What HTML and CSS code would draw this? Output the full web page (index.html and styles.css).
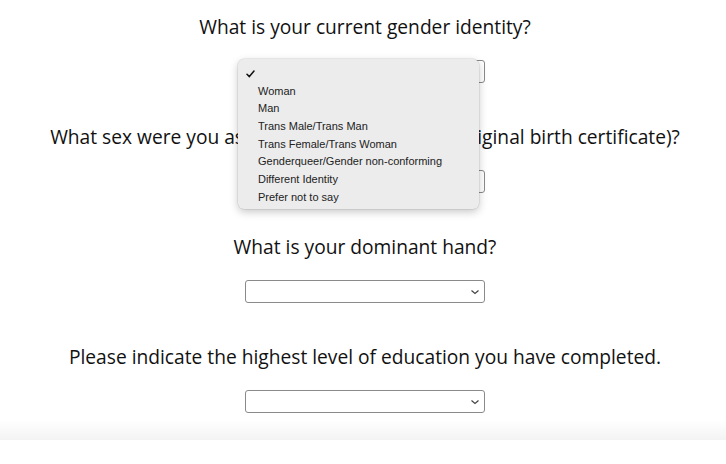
FILE: index.html
```html
<!DOCTYPE html>
<html lang="en">
<head>
<meta charset="utf-8">
<title>Survey</title>
<link rel="stylesheet" href="styles.css">
</head>
<body>
<main class="form">
  <section class="question">
    <h2 class="label">What is your current gender identity?</h2>
    <div class="select-wrap">
      <select class="field" aria-label="What is your current gender identity?"><option></option></select>
      <ul class="popup">
        <li class="opt selected"><svg class="check" width="9" height="8" viewBox="0 0 9 8" aria-hidden="true"><path d="M1 4.2 L3.4 6.6 L8 1" fill="none" stroke="#111" stroke-width="1.5" stroke-linecap="round" stroke-linejoin="round"/></svg></li>
        <li class="opt">Woman</li>
        <li class="opt">Man</li>
        <li class="opt">Trans Male/Trans Man</li>
        <li class="opt">Trans Female/Trans Woman</li>
        <li class="opt">Genderqueer/Gender non-conforming</li>
        <li class="opt">Different Identity</li>
        <li class="opt">Prefer not to say</li>
      </ul>
    </div>
  </section>
  <section class="question">
    <h2 class="label">What sex were you assigned at birth (on your original birth certificate)?</h2>
    <div class="select-wrap">
      <select class="field" aria-label="sex"><option></option></select>
    </div>
  </section>
  <section class="question">
    <h2 class="label">What is your dominant hand?</h2>
    <div class="select-wrap">
      <select class="field" aria-label="hand"><option></option></select>
    </div>
  </section>
  <section class="question">
    <h2 class="label">Please indicate the highest level of education you have completed.</h2>
    <div class="select-wrap">
      <select class="field" aria-label="education"><option></option></select>
    </div>
  </section>
</main>
<div class="shade"></div>
</body>
</html>
```

FILE: styles.css
```css
html, body {
  margin: 0;
  padding: 0;
  background: #fff;
}
body {
  font-family: "Open Sans", "Noto Sans", sans-serif;
  color: #111;
  height: 464px;
  overflow: hidden;
  position: relative;
}
.form {
  display: flex;
  flex-direction: column;
  align-items: center;
  padding-top: 10px;
  padding-left: 4px;
}
.question {
  display: flex;
  flex-direction: column;
  align-items: center;
  margin-bottom: 37px;
}
.label {
  margin: 0 0 16px;
  font-size: 19.2px;
  font-weight: 400;
  line-height: 34px;
  text-align: center;
  white-space: nowrap;
}
.select-wrap {
  position: relative;
  height: 23px;
}
.field {
  -webkit-appearance: none;
  appearance: none;
  display: block;
  width: 240px;
  height: 23px;
  margin: 0;
  border: 1px solid #8a8a8a;
  border-radius: 3px;
  background-color: #fff;
  background-image: url("data:image/svg+xml;utf8,<svg xmlns='http://www.w3.org/2000/svg' width='10' height='6' viewBox='0 0 10 6'><path d='M1.5 1.5 L5 4.5 L8.5 1.5' fill='none' stroke='%23444' stroke-width='1.2'/></svg>");
  background-repeat: no-repeat;
  background-position: right 4px center;
}
.popup {
  position: absolute;
  z-index: 10;
  left: -7px;
  top: -1px;
  width: 241px;
  height: 150px;
  box-sizing: border-box;
  margin: 0;
  padding: 6px 0 0;
  list-style: none;
  background: #ececec;
  border-radius: 6px;
  box-shadow: 0 0 0 0.5px rgba(0,0,0,0.12), 0 3px 9px rgba(0,0,0,0.22);
  font-family: "Liberation Sans", Arial, sans-serif;
  font-size: 11px;
  color: #222;
}
.opt {
  height: 17.7px;
  line-height: 17.7px;
  padding-left: 20px;
  position: relative;
}
.check {
  position: absolute;
  left: 8px;
  top: 5px;
}
.shade {
  position: absolute;
  left: 0;
  right: 0;
  top: 420px;
  height: 20px;
  background: linear-gradient(to bottom, rgba(243,243,243,0), #f3f3f3);
}
```
